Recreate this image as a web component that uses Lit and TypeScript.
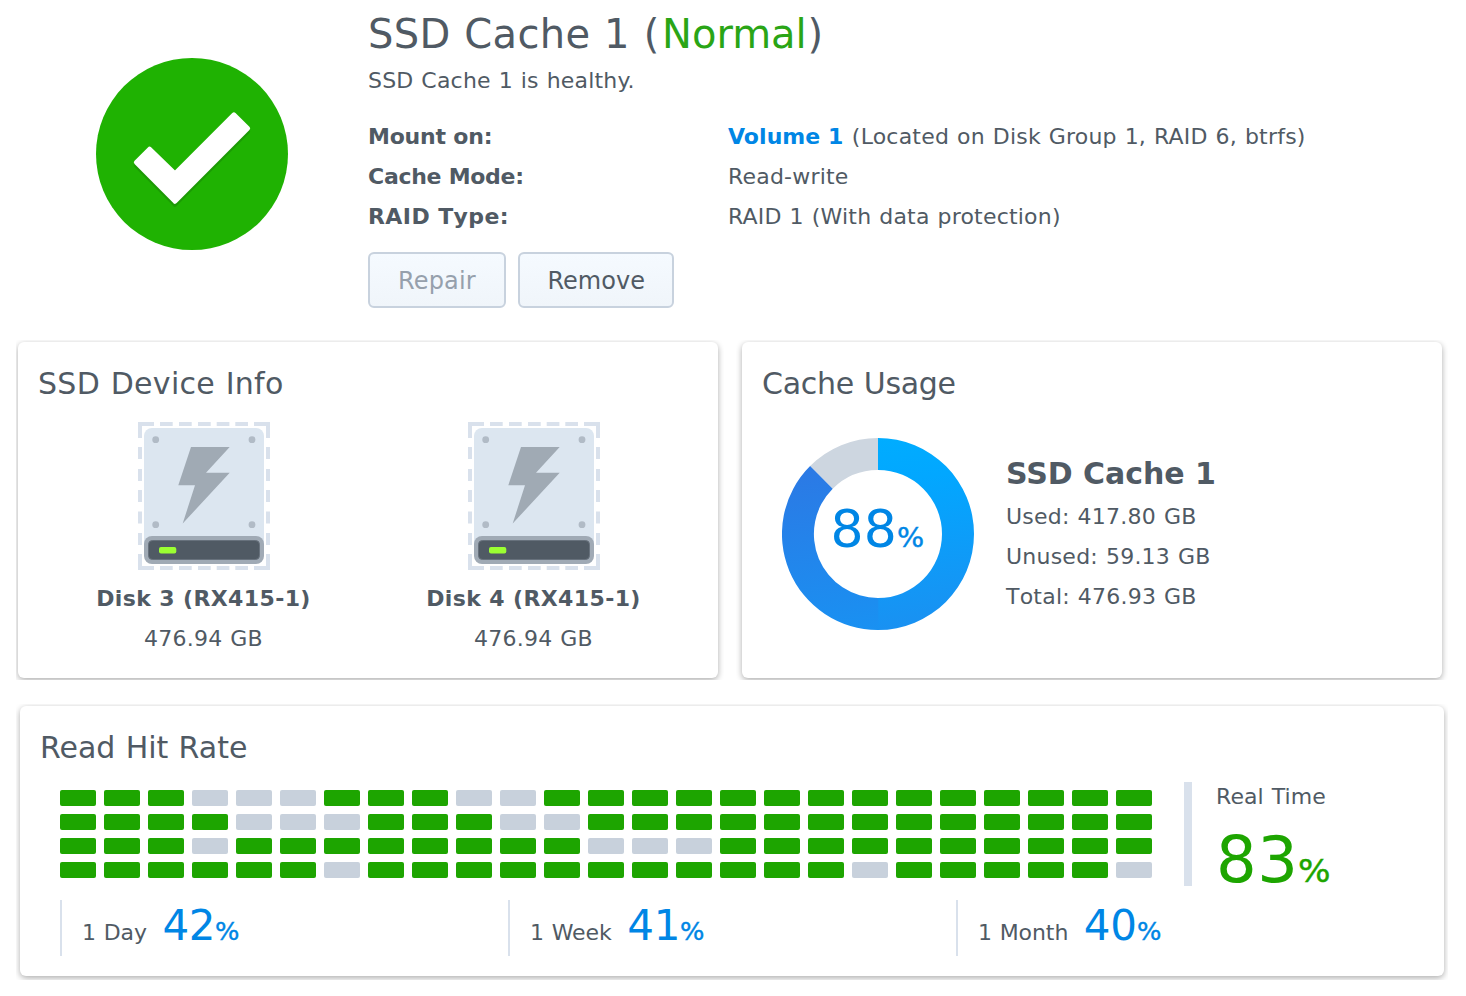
import { LitElement, html, css, svg } from "lit";
import { customElement, property } from "lit/decorators.js";
import { classMap } from "lit/directives/class-map.js";

@customElement("status-badge")
class StatusBadge extends LitElement {
  static styles = css`
    :host { display: block; width: 192px; height: 192px; }
    svg { display: block; }
  `;
  render() {
    const tick = "M40.2 104.4 53.5 91 79 115.6 137.9 56.7 151.8 70.3 79 143.5Z";
    return html`<svg width="192" height="192" viewBox="0 0 192 192">
      <circle cx="96" cy="96" r="96" fill="#1fb202" />
      <g stroke-width="4.6" stroke-linejoin="round">
        <path d=${tick} transform="translate(0 3)" fill="#1c9a05" stroke="#1c9a05" />
        <path d=${tick} fill="#fff" stroke="#fff" />
      </g>
    </svg>`;
  }
}

@customElement("disk-icon")
class DiskIcon extends LitElement {
  static styles = css`
    :host { display: block; width: 132px; height: 148px; }
    svg { display: block; }
  `;
  render() {
    const across = [22, 41, 60, 78.7, 97.3];
    const down = [25, 47, 68, 89.5, 111];
    return html`<svg width="132" height="148" viewBox="0 0 132 148">
      <g fill="#d9e1ec">
        <path d="M0 0H16V4H4V16H0ZM116 0H132V16H128V4H116ZM0 132H4V144H16V148H0ZM128 132H132V148H116V144H128Z" />
        ${across.map((x) => svg`<rect x=${x} y="0" width="12.7" height="4" /><rect x=${x} y="144" width="12.7" height="4" />`)}
        ${down.map((y) => svg`<rect x="0" y=${y} width="4" height="12" /><rect x="128" y=${y} width="4" height="12" />`)}
      </g>
      <rect x="6" y="6" width="120" height="130" rx="8" fill="#dce6f0" />
      <g fill="#b1bbc6">
        <circle cx="17.7" cy="17.7" r="3.4" /><circle cx="114" cy="17.7" r="3.4" />
        <circle cx="17.7" cy="102.7" r="3.4" /><circle cx="114" cy="102.7" r="3.4" />
      </g>
      <path d="M53 25H91.7L68 50.7H91.7L44.7 101.5 57 63.3H40.3Z" fill="#a0aab4" />
      <rect x="6" y="114" width="120" height="28" rx="8" fill="#a0aab5" />
      <rect x="10.5" y="118.5" width="111" height="19" rx="4" fill="#505a64" stroke="#67717c" />
      <rect x="21" y="125" width="17.3" height="6.6" rx="2" fill="#9bff32" />
    </svg>`;
  }
}

@customElement("usage-donut")
class UsageDonut extends LitElement {
  @property({ type: Number }) value = 0;
  static styles = css`
    :host { display: grid; width: 192px; height: 192px; color: #0086e5; }
    svg, .label { grid-area: 1 / 1; }
    .label { display: flex; align-items: baseline; padding: 61px 0 0 48.5px; font-size: 52px; line-height: 60px; letter-spacing: 0.2px; }
    .pct { font-size: 26px; letter-spacing: 0; transform: scaleX(1.1); transform-origin: 0 50%; -webkit-text-stroke: 0.4px currentColor; }
  `;
  render() {
    return html`<svg width="192" height="192" viewBox="0 0 192 192">
        <defs>
          <linearGradient id="r" gradientUnits="userSpaceOnUse" x1="70" y1="0" x2="96" y2="192">
            <stop offset="0" stop-color="#00adff" /><stop offset=".25" stop-color="#02a7ff" /><stop offset="1" stop-color="#1991f2" />
          </linearGradient>
          <linearGradient id="l" gradientUnits="userSpaceOnUse" x1="96" y1="192" x2="70" y2="28">
            <stop offset="0" stop-color="#1991f2" /><stop offset="1" stop-color="#2b7ae5" />
          </linearGradient>
        </defs>
        <path d="M28.1 28.1A96 96 0 0 1 96 0V32A64 64 0 0 0 50.7 50.7Z" fill="#cdd6e0" />
        <path d="M96 0A96 96 0 0 1 96 192V160A64 64 0 0 0 96 32Z" fill="url(#r)" />
        <path d="M96.3 192A96 96 0 0 1 28.1 28.1L50.7 50.7A64 64 0 0 0 96.3 160Z" fill="url(#l)" />
      </svg>
      <div class="label">${this.value}<span class="pct">%</span></div>`;
  }
}

const MISSES = [
  [3, 4, 5, 9, 10],
  [4, 5, 6, 10, 11],
  [3, 12, 13, 14],
  [6, 18, 24],
];

@customElement("hit-grid")
class HitGrid extends LitElement {
  static styles = css`
    :host { display: grid; grid-template-columns: repeat(25, 36px); grid-auto-rows: 16px; gap: 8px; }
    .cell { border-radius: 2px; background: #1da500; }
    .cell.miss { background: #c8d1dc; }
  `;
  render() {
    return MISSES.map((row) =>
      Array.from({ length: 25 }, (_, i) => html`<div class=${classMap({ cell: true, miss: row.includes(i) })}></div>`)
    );
  }
}

@customElement("app-root")
class AppRoot extends LitElement {
  static styles = css`
    :host {
      display: block; box-sizing: border-box; width: 1466px; height: 996px; overflow: hidden; padding: 10px 18px 0;
      background: #fff; color: #505a64;
      font-family: "DejaVu Sans", sans-serif; font-size: 22px; line-height: 40px; word-spacing: 0.034em; white-space: nowrap;
    }
    b, .name { font-weight: 700; word-spacing: 0; }
    .summary { display: flex; height: 332px; }
    .badge { padding: 48px 80px 0 78px; }
    .title { display: flex; font-size: 40px; line-height: 48px; letter-spacing: 0.32px; }
    .title .lead { width: 294px; white-space: pre; }
    .title .state { width: 145.5px; color: #2aa516; letter-spacing: 0; }
    .health { margin-top: 3px; letter-spacing: 0.19px; }
    .facts { display: grid; grid-template-columns: 360px auto; margin-top: 16px; }
    .mount { letter-spacing: -0.2px; }
    .mode { letter-spacing: -0.27px; }
    .raid { letter-spacing: 0.42px; font-kerning: none; }
    .located { display: flex; letter-spacing: 0.2px; gap: 8.5px; }
    .link { color: #0086e5; letter-spacing: 0.05px; }
    .rw { letter-spacing: 0.2px; }
    .buttons { display: flex; gap: 12px; margin-top: 15px; }
    .btn {
      box-sizing: border-box; height: 56px; border: 2px solid #c8d2de; border-radius: 6px; margin: 0;
      background: linear-gradient(#f5faff, #f0f5fa); color: inherit; text-align: left;
      font-family: inherit; font-size: 24px; line-height: 49px;
    }
    .repair { width: 138px; padding: 3px 0 0 28px; letter-spacing: 0.15px; color: #96a0ac; }
    .remove { width: 156px; padding: 3px 0 0 27.5px; letter-spacing: 0; }
    .cards { display: flex; gap: 24px; }
    .card {
      box-sizing: border-box; border-radius: 6px; background: #fff; padding: 22px 20px 0;
      box-shadow: 0 2px 6px rgba(0, 0, 0, 0.33); clip-path: inset(-2px -6px -2px -2px);
    }
    .device, .usage { width: 700px; height: 336px; }
    .usage { clip-path: inset(-2px -6px -2px -6px); }
    .rate { width: 1424px; height: 270px; margin: 28px 0 0 2px; clip-path: inset(-2px -4px -4px -4px); }
    .heading { font-size: 30px; }
    .device .heading { letter-spacing: 0.3px; }
    .usage .heading { letter-spacing: -0.3px; }
    .disks { display: flex; margin: 18px 0 0 1px; }
    .disk { display: flex; flex: none; flex-direction: column; align-items: center; width: 330px; }
    .disk .name { margin-top: 9px; letter-spacing: 0.38px; padding-right: 1px; }
    .disk .size { letter-spacing: 0.22px; padding-right: 1px; }
    .usage-body { display: flex; gap: 32px; margin: 34px 0 0 20px; letter-spacing: 0.23px; }
    .usage-info { padding-top: 16px; }
    .usage-info .name { font-size: 30px; margin-bottom: 3px; letter-spacing: -0.05px; }
    .total { letter-spacing: 0.22px; font-kerning: none; }
    .live { display: flex; height: 104px; margin: 14px 0 0 20px; }
    .live hit-grid { padding-top: 8px; }
    .bar { width: 8px; height: 104px; margin: 0 24px 0 32px; background: #d9e1ec; }
    .now-label { padding-top: 1px; line-height: 28px; letter-spacing: 0.1px; }
    .now { display: flex; align-items: baseline; margin-top: 14px; font-size: 64px; line-height: 70px; letter-spacing: 0.5px; color: #1da500; }
    .pct { letter-spacing: 0; transform: scaleX(1.07); transform-origin: 0 50%; -webkit-text-stroke: 0.4px currentColor; }
    .now .pct { font-size: 32px; }
    .stats { display: flex; margin: 14px 0 0 20px; }
    .stat { display: flex; flex: none; align-items: baseline; box-sizing: border-box; width: 448px; height: 56px; border-left: 2px solid #d9e1ec; padding-left: 20px; letter-spacing: -0.05px; }
    .stat .label { line-height: 28px; }
    .stat .num { margin-left: 15.5px; font-size: 42px; line-height: 51px; letter-spacing: -0.3px; color: #0086e5; }
    .stat .pct { font-size: 24px; color: #0086e5; }
  `;

  stats: [string, number][] = [["1 Day", 42], ["1 Week", 41], ["1 Month", 40]];

  render() {
    return html`
      <section class="summary">
        <div class="badge"><status-badge></status-badge></div>
        <div>
          <div class="title"><span class="lead">SSD Cache 1 (</span><span class="state">Normal</span><span>)</span></div>
          <div class="health">SSD Cache 1 is healthy.</div>
          <div class="facts">
            <b class="mount">Mount on:</b>
            <div class="located"><b class="link">Volume 1</b><span>(Located on Disk Group 1, RAID 6, btrfs)</span></div>
            <b class="mode">Cache Mode:</b><span class="rw">Read-write</span>
            <b class="raid">RAID Type:</b><span class="rw">RAID 1 (With data protection)</span>
          </div>
          <div class="buttons">
            <button class="btn repair" disabled>Repair</button>
            <button class="btn remove">Remove</button>
          </div>
        </div>
      </section>
      <div class="cards">
        <section class="card device">
          <div class="heading">SSD Device Info</div>
          <div class="disks">
            ${[3, 4].map((n) => html`<div class="disk">
              <disk-icon></disk-icon>
              <div class="name">Disk ${n} (RX415-1)</div>
              <div class="size">476.94 GB</div>
            </div>`)}
          </div>
        </section>
        <section class="card usage">
          <div class="heading">Cache Usage</div>
          <div class="usage-body">
            <usage-donut .value=${88}></usage-donut>
            <div class="usage-info">
              <div class="name">SSD Cache 1</div>
              <div>Used: 417.80 GB</div>
              <div>Unused: 59.13 GB</div>
              <div class="total">Total: 476.93 GB</div>
            </div>
          </div>
        </section>
      </div>
      <section class="card rate">
        <div class="heading">Read Hit Rate</div>
        <div class="live">
          <hit-grid></hit-grid>
          <div class="bar"></div>
          <div>
            <div class="now-label">Real Time</div>
            <div class="now">83<span class="pct">%</span></div>
          </div>
        </div>
        <div class="stats">
          ${this.stats.map(([label, n]) => html`<div class="stat">
            <span class="label">${label}</span><span class="num">${n}</span><span class="pct">%</span>
          </div>`)}
        </div>
      </section>
    `;
  }
}
